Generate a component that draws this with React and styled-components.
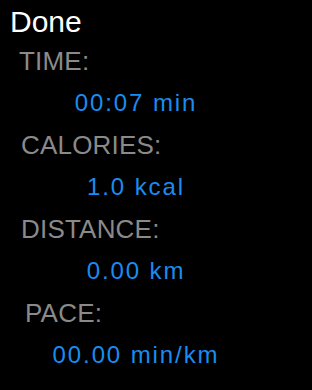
import React from "react"
import styled, { createGlobalStyle } from "styled-components"

const GlobalStyle = createGlobalStyle`
  html, body {
    margin: 0;
    padding: 0;
    background: #000;
  }
  body {
    font-family: "Liberation Sans", Arial, sans-serif;
  }
`

const Screen = styled.div`
  width: 312px;
  height: 390px;
  background: #000;
  overflow: hidden;
  display: flex;
  flex-direction: column;
`

const Title = styled.div`
  height: 40px;
  box-sizing: border-box;
  padding: 3px 0 0 10px;
  font-size: 30px;
  line-height: 37px;
  color: #fff;
`

const Label = styled.div`
  height: 42px;
  padding-left: ${(p) => p.indent}px;
  font-size: 26px;
  line-height: 42px;
  letter-spacing: 0.2px;
  color: #8a8a8a;
`

const Value = styled.div`
  height: 42px;
  width: 272px;
  text-align: center;
  font-size: 24px;
  line-height: 42px;
  letter-spacing: 1.9px;
  color: #1a8cf0;
`

const stats = [
  { label: "TIME:", indent: 19, value: "00:07 min" },
  { label: "CALORIES:", indent: 21, value: "1.0 kcal" },
  { label: "DISTANCE:", indent: 21, value: "0.00 km" },
  { label: "PACE:", indent: 25, value: "00.00 min/km" },
]

const App = () => (
  <>
    <GlobalStyle />
    <Screen>
      <Title>Done</Title>
      {stats.map((s) => (
        <React.Fragment key={s.label}>
          <Label indent={s.indent}>{s.label}</Label>
          <Value>{s.value}</Value>
        </React.Fragment>
      ))}
    </Screen>
  </>
)

export default App
